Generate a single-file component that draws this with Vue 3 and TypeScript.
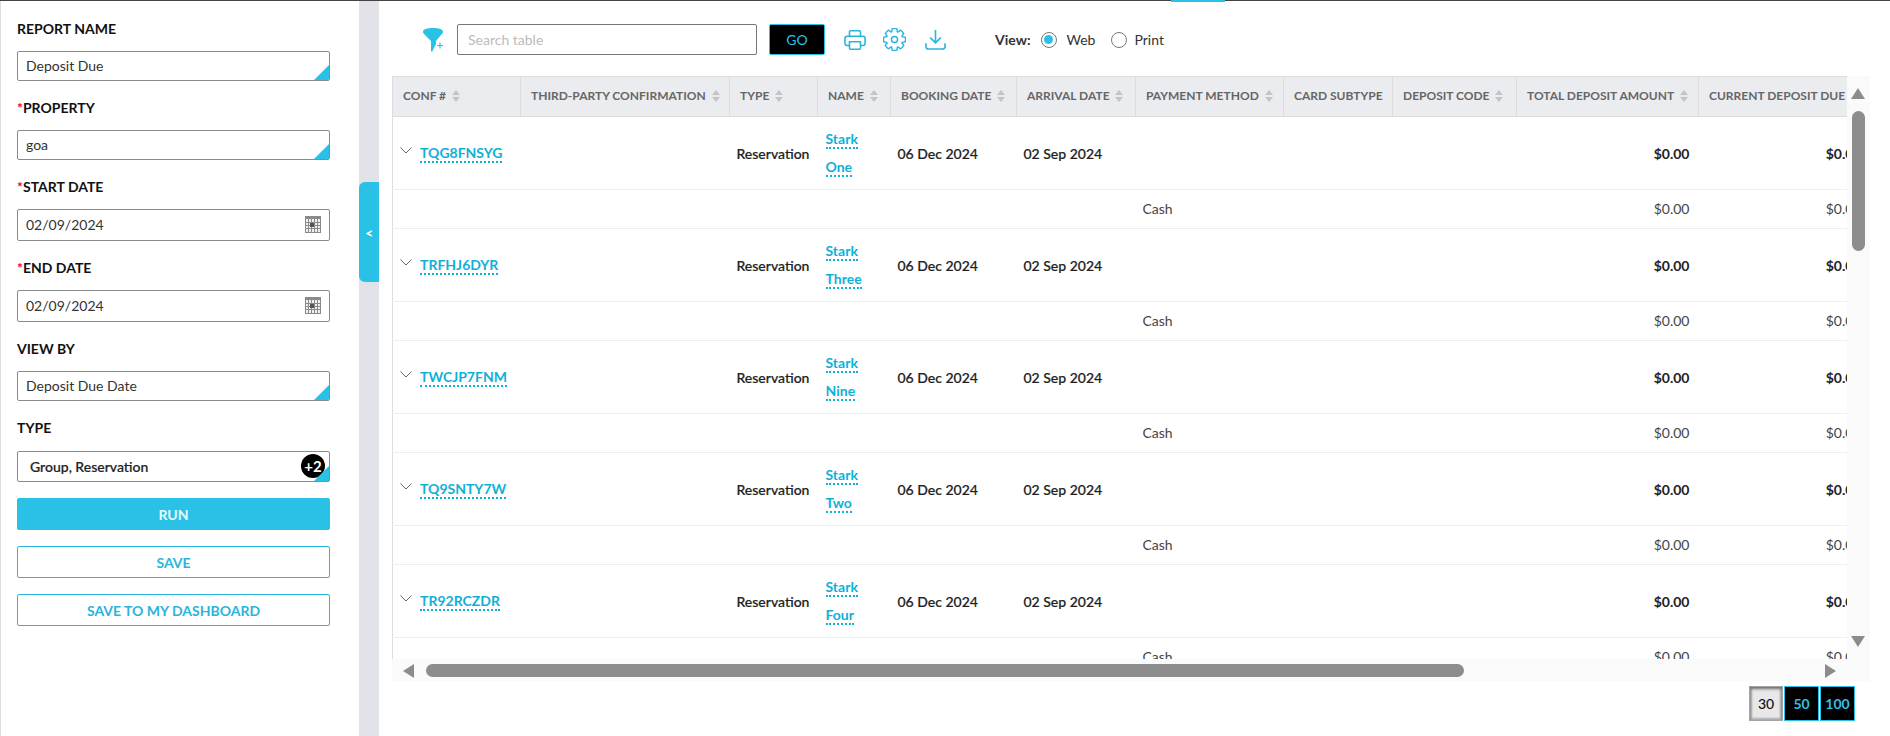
<script setup lang="ts">
type Booking = { conf: string; first: string; last: string };

const bookings: Booking[] = [
  { conf: "TQG8FNSYG", first: "Stark", last: "One" },
  { conf: "TRFHJ6DYR", first: "Stark", last: "Three" },
  { conf: "TWCJP7FNM", first: "Stark", last: "Nine" },
  { conf: "TQ9SNTY7W", first: "Stark", last: "Two" },
  { conf: "TR92RCZDR", first: "Stark", last: "Four" },
];

const columns = [
  { label: "CONF #", width: 128, sort: true },
  { label: "THIRD-PARTY CONFIRMATION", width: 209, sort: true },
  { label: "TYPE", width: 88, sort: true },
  { label: "NAME", width: 73, sort: true },
  { label: "BOOKING DATE", width: 126, sort: true },
  { label: "ARRIVAL DATE", width: 119, sort: true },
  { label: "PAYMENT METHOD", width: 148, sort: true },
  { label: "CARD SUBTYPE", width: 109, sort: false },
  { label: "DEPOSIT CODE", width: 124, sort: true },
  { label: "TOTAL DEPOSIT AMOUNT", width: 182, sort: true },
  { label: "CURRENT DEPOSIT DUE", width: 172, sort: false },
];

// eight rounded cog teeth around the centre of a 24 box
function gearPath(): string {
  const point = (deg: number, r: number) => {
    const a = (deg * Math.PI) / 180;
    return `${(12 + r * Math.cos(a)).toFixed(2)} ${(12 + r * Math.sin(a)).toFixed(2)}`;
  };
  let d = "";
  for (let i = 0; i < 8; i++) {
    const a = i * 45 - 90;
    d += `${i === 0 ? "M" : "L"}${point(a - 22.5, 8.4)} `;
    d += `C${point(a - 14, 8.6)} ${point(a - 17, 12.4)} ${point(a - 7, 11.4)} `;
    d += `Q${point(a, 11.8)} ${point(a + 7, 11.4)} `;
    d += `C${point(a + 17, 12.4)} ${point(a + 14, 8.6)} ${point(a + 22.5, 8.4)} `;
  }
  return d + "Z";
}

const gear = gearPath();
</script>

<template>
  <div class="page">
    <aside class="sidebar">
      <label class="field-label">REPORT NAME</label>
      <div class="input select">Deposit Due</div>
      <label class="field-label"><i>*</i>PROPERTY</label>
      <div class="input select">goa</div>
      <label class="field-label"><i>*</i>START DATE</label>
      <div class="input date">
        02/09/2024
        <svg class="cal" width="16" height="17" viewBox="0 0 16 17">
          <rect width="16" height="17" fill="#8a8a8a" />
          <path d="M1 3h14v13H1z" fill="#f0f0f0" />
          <path d="M0 6.500h16M0 9.500h16M0 12.500h16M3.500 3v14M6.500 3v14M9.500 3v14M12.500 3v14" stroke="#8a8a8a" stroke-width="1" />
          <rect x="5" y="7" width="4" height="4" fill="#555" />
        </svg>
      </div>
      <label class="field-label"><i>*</i>END DATE</label>
      <div class="input date">
        02/09/2024
        <svg class="cal" width="16" height="17" viewBox="0 0 16 17">
          <rect width="16" height="17" fill="#8a8a8a" />
          <path d="M1 3h14v13H1z" fill="#f0f0f0" />
          <path d="M0 6.500h16M0 9.500h16M0 12.500h16M3.500 3v14M6.500 3v14M9.500 3v14M12.500 3v14" stroke="#8a8a8a" stroke-width="1" />
          <rect x="5" y="7" width="4" height="4" fill="#555" />
        </svg>
      </div>
      <label class="field-label">VIEW BY</label>
      <div class="input select">Deposit Due Date</div>
      <label class="field-label tight">TYPE</label>
      <div class="input select multi">
        Group, Reservation
        <span class="more">+2</span>
      </div>
      <button class="btn primary">RUN</button>
      <button class="btn outline">SAVE</button>
      <button class="btn outline">SAVE TO MY DASHBOARD</button>
    </aside>

    <div class="divider">
      <button class="collapse">&lt;</button>
    </div>

    <main class="content">
      <span class="top-tab"></span>
      <div class="toolbar">
        <svg class="funnel" width="24" height="26" viewBox="0 0 24 26">
          <path d="M1 5c0-3 4-4 10-4s10 1 10 4c0 1-1 2-2 3l-5 6v3l-4 8-1-1v-10L3 8C2 7 1 6 1 5z" fill="#29c2e6" />
          <path d="M15 18.500h6M18 15.500v6" stroke="#29c2e6" stroke-width="1.200" fill="none" />
        </svg>
        <input class="search" placeholder="Search table" />
        <button class="go">GO</button>
        <svg class="tool print" width="22" height="22" viewBox="0 0 24 24" fill="none" stroke="#29b5dc" stroke-width="1.700">
          <path d="M6 8V3a1 1 0 0 1 1-1h10a1 1 0 0 1 1 1v5" />
          <path d="M6 18H3.500A2.500 2.500 0 0 1 1 15.500v-5A2.500 2.500 0 0 1 3.500 8h17a2.500 2.500 0 0 1 2.500 2.500v5a2.500 2.500 0 0 1-2.500 2.500H18" />
          <path d="M6 14h12v7a1 1 0 0 1-1 1H7a1 1 0 0 1-1-1z" />
        </svg>
        <svg class="tool gear" width="23" height="23" viewBox="0 0 24 24" fill="none" stroke="#29b5dc" stroke-width="1.500">
          <circle cx="12" cy="12" r="3.200" />
          <path :d="gear" stroke-linejoin="round" />
        </svg>
        <svg class="tool download" width="21" height="21" viewBox="0 0 22 22" fill="none" stroke="#29b5dc" stroke-width="1.700">
          <path d="M11 1v13M5.500 9l5.500 5.500L16.500 9" />
          <path d="M1 15v3.500A2.500 2.500 0 0 0 3.500 21h15a2.500 2.500 0 0 0 2.500-2.500V15" />
        </svg>
        <span class="view-label">View:</span>
        <span class="radio on"></span>
        <span class="radio-text">Web</span>
        <span class="radio second"></span>
        <span class="radio-text last">Print</span>
      </div>

      <div class="grid-wrap">
        <div class="table-clip">
          <table class="report">
            <colgroup>
              <col v-for="col in columns" :key="col.label" :style="{ width: col.width + 'px' }" />
            </colgroup>
            <thead>
              <tr>
                <th v-for="col in columns" :key="col.label">
                  {{ col.label }}
                  <span v-if="col.sort" class="sort"></span>
                </th>
              </tr>
            </thead>
            <tbody>
              <template v-for="item in bookings" :key="item.conf">
                <tr class="main-row">
                  <td>
                    <div class="conf">
                      <svg width="12" height="7" viewBox="0 0 12 7" fill="none" stroke="#666" stroke-width="1">
                        <path d="M.5.5 6 6l5.500-5.500" />
                      </svg>
                      <a class="link">{{ item.conf }}</a>
                    </div>
                  </td>
                  <td></td>
                  <td>Reservation</td>
                  <td>
                    <div class="name-cell">
                      <a class="link">{{ item.first }}</a>
                      <a class="link">{{ item.last }}</a>
                    </div>
                  </td>
                  <td>06 Dec 2024</td>
                  <td>02 Sep 2024</td>
                  <td></td>
                  <td></td>
                  <td></td>
                  <td class="num">$0.00</td>
                  <td class="num">$0.00</td>
                </tr>
                <tr class="sub-row">
                  <td></td>
                  <td></td>
                  <td></td>
                  <td></td>
                  <td></td>
                  <td></td>
                  <td>Cash</td>
                  <td></td>
                  <td></td>
                  <td class="num">$0.00</td>
                  <td class="num">$0.00</td>
                </tr>
              </template>
            </tbody>
          </table>
          <div class="vbar">
            <span class="tri up"></span>
            <span class="vthumb"></span>
            <span class="tri down"></span>
          </div>
        </div>
        <div class="hbar">
          <span class="tri left"></span>
          <span class="hthumb"></span>
          <span class="tri right"></span>
        </div>
      </div>

      <div class="pager">
        <button class="page-btn current">30</button>
        <button class="page-btn">50</button>
        <button class="page-btn">100</button>
      </div>
    </main>
  </div>
</template>

<style>
html,
body {
  margin: 0;
  background: #fff;
}
</style>

<style scoped>
.page {
  display: flex;
  width: 1890px;
  height: 736px;
  box-sizing: border-box;
  border-top: 1px solid #444;
  font-family: Lato, "Liberation Sans", sans-serif;
  font-size: 14px;
  color: #222;
  background: #fff;
}
.sidebar {
  width: 359px;
  box-sizing: border-box;
  padding: 20px 29px 0 16px;
  border-left: 1px solid #ddd;
  flex: none;
}
.field-label {
  display: block;
  height: 16px;
  line-height: 16px;
  font-size: 14px;
  font-weight: 700;
  color: #111;
  margin-bottom: 14px;
}
.field-label.tight {
  margin-bottom: 15px;
}
.field-label i {
  color: #f00;
  font-style: normal;
  font-weight: 700;
}
.input {
  position: relative;
  height: 30px;
  box-sizing: border-box;
  border: 1px solid #8a8a8a;
  border-radius: 2px;
  padding: 0 8px;
  line-height: 28px;
  font-size: 14px;
  color: #333;
  margin-bottom: 19px;
  overflow: hidden;
}
.input.select::after {
  content: "";
  position: absolute;
  right: 0;
  bottom: 0;
  border-style: solid;
  border-width: 0 0 15px 15px;
  border-color: transparent transparent #29c2e6 transparent;
}
.input.date {
  height: 32px;
  line-height: 30px;
}
.cal {
  position: absolute;
  right: 8px;
  top: 6px;
}
.multi {
  padding-left: 12px;
  font-weight: 500;
  color: #222;
  overflow: visible;
  height: 31px;
  line-height: 29px;
  margin-bottom: 16px;
  -webkit-text-stroke: 0.2px #222;
}
.more {
  position: absolute;
  right: 4px;
  top: 2px;
  width: 24px;
  height: 24px;
  border-radius: 50%;
  background: #000;
  color: #fff;
  font-size: 15px;
  font-weight: 700;
  line-height: 24px;
  text-align: center;
  -webkit-text-stroke: 0;
}
.btn {
  display: block;
  width: 100%;
  height: 32px;
  border-radius: 2px;
  font-family: inherit;
  font-size: 14px;
  font-weight: 700;
  margin-bottom: 16px;
  padding: 0;
}
.primary {
  background: #29c2e6;
  border: 1px solid #29c2e6;
  color: #e8f8fc;
}
.outline {
  background: #fff;
  border: 1px solid #29b5dc;
  color: #29b5dc;
}
.divider {
  position: relative;
  width: 20px;
  flex: none;
  background: #e2e3e8;
}
.collapse {
  position: absolute;
  left: 0;
  top: 181px;
  width: 20px;
  height: 100px;
  padding: 0;
  border: 0;
  border-radius: 6px 0 0 6px;
  background: #29c2e6;
  color: #fff;
  font-family: inherit;
  font-size: 14px;
  font-weight: 900;
}
.content {
  position: relative;
  flex: 1;
  min-width: 0;
  padding: 0 20px 0 13px;
}
.top-tab {
  position: absolute;
  left: 792px;
  top: -1px;
  width: 54px;
  height: 2px;
  background: #29c2e6;
}
.toolbar {
  display: flex;
  align-items: center;
  height: 31px;
  margin-top: 23px;
}
.funnel {
  margin-left: 30px;
  flex: none;
}
.search {
  width: 300px;
  height: 31px;
  box-sizing: border-box;
  margin-left: 11px;
  padding: 0 10px;
  border: 1px solid #777;
  border-radius: 2px;
  font-family: inherit;
  font-size: 14px;
  outline: none;
}
.search::placeholder {
  color: #bbb;
}
.go {
  width: 56px;
  height: 31px;
  margin-left: 12px;
  padding: 0;
  border: 1px solid #29c2e6;
  border-radius: 2px;
  background: #000;
  color: #29c2e6;
  font-family: inherit;
  font-size: 14px;
}
.tool {
  flex: none;
}
.print {
  margin-left: 19px;
}
.gear {
  margin-left: 17px;
}
.download {
  margin-left: 19px;
}
.view-label {
  margin-left: 49px;
  font-weight: 700;
  font-size: 14px;
  color: #333;
}
.radio {
  position: relative;
  width: 16px;
  height: 16px;
  box-sizing: border-box;
  margin-left: 10px;
  border: 1.500px solid #777;
  border-radius: 50%;
}
.radio.on::after {
  content: "";
  position: absolute;
  left: 2px;
  top: 2px;
  width: 9px;
  height: 9px;
  border-radius: 50%;
  background: #29c2e6;
}
.radio.second {
  margin-left: 16px;
}
.radio-text {
  margin-left: 10px;
  color: #333;
}
.radio-text.last {
  margin-left: 7px;
}
.grid-wrap {
  margin-top: 21px;
  width: 1478px;
}
.table-clip {
  position: relative;
  height: 583px;
  overflow: hidden;
  padding-right: 23px;
}
.report {
  table-layout: fixed;
  width: 1478px;
  border-collapse: collapse;
  border-left: 1px solid #ddd;
}
.report th {
  height: 40px;
  box-sizing: border-box;
  padding: 0 0 2px 10px;
  background: #ebecf0;
  border: 1px solid #dcdcdc;
  font-size: 12px;
  font-weight: 700;
  color: #666;
  text-align: left;
  white-space: nowrap;
}
.sort {
  display: inline-block;
  position: relative;
  width: 8px;
  height: 12px;
  margin-left: 3px;
  vertical-align: -2px;
}
.sort::before,
.sort::after {
  content: "";
  position: absolute;
  left: 0;
  border-left: 4px solid transparent;
  border-right: 4px solid transparent;
}
.sort::before {
  top: 0;
  border-bottom: 5px solid #c4c4c4;
}
.sort::after {
  bottom: 0;
  border-top: 5px solid #c4c4c4;
}
.report td {
  box-sizing: border-box;
  padding: 0 7px;
  font-size: 14px;
  color: #222;
  white-space: nowrap;
  overflow: hidden;
}
.main-row td {
  height: 73px;
  border-bottom: 1px solid #eee;
  font-weight: 500;
  -webkit-text-stroke: 0.2px #222;
}
.report .sub-row td {
  height: 39px;
  padding-bottom: 2px;
  border-bottom: 1px solid #eee;
  color: #444;
  font-weight: 400;
}
.report td.num {
  text-align: right;
  padding-right: 9px;
}
.main-row .num {
  font-weight: 700;
  -webkit-text-stroke: 0;
}
.conf {
  display: flex;
  align-items: center;
  gap: 8px;
}
.conf svg {
  margin-top: -6px;
  flex: none;
}
.link {
  color: #0fb0d8;
  font-weight: 700;
  border-bottom: 2px dotted #0fb0d8;
  line-height: 17px;
  -webkit-text-stroke: 0;
}
.name-cell {
  display: flex;
  flex-direction: column;
  align-items: flex-start;
  gap: 9px;
  margin-left: 1px;
}
.vbar {
  position: absolute;
  top: 0;
  right: 0;
  bottom: 0;
  width: 23px;
  background: #fafafa;
}
.vthumb {
  position: absolute;
  left: 5px;
  top: 35px;
  width: 13px;
  height: 140px;
  border-radius: 7px;
  background: #8c8c8c;
}
.tri {
  position: absolute;
  width: 0;
  height: 0;
}
.tri.up {
  left: 4px;
  top: 12px;
  border-left: 7px solid transparent;
  border-right: 7px solid transparent;
  border-bottom: 11px solid #8c8c8c;
}
.tri.down {
  left: 4px;
  bottom: 12px;
  border-left: 7px solid transparent;
  border-right: 7px solid transparent;
  border-top: 11px solid #8c8c8c;
}
.hbar {
  position: relative;
  height: 22px;
  background: #fafafa;
}
.hthumb {
  position: absolute;
  left: 34px;
  top: 5px;
  width: 1038px;
  height: 13px;
  border-radius: 7px;
  background: #8c8c8c;
}
.tri.left {
  left: 11px;
  top: 5px;
  border-top: 7px solid transparent;
  border-bottom: 7px solid transparent;
  border-right: 11px solid #8c8c8c;
}
.tri.right {
  right: 34px;
  top: 5px;
  border-top: 7px solid transparent;
  border-bottom: 7px solid transparent;
  border-left: 11px solid #8c8c8c;
}
.pager {
  display: flex;
  justify-content: flex-end;
  width: 1463px;
  gap: 1px;
  margin-top: 5px;
}
.page-btn {
  width: 35px;
  height: 35px;
  padding: 0;
  box-sizing: border-box;
  border: 1px solid #29c2e6;
  background: #000;
  color: #29c2e6;
  font-family: inherit;
  font-size: 14px;
  font-weight: 700;
}
.page-btn.current {
  width: 34px;
  border: 1px solid #a5a5a5;
  box-shadow: inset 0 2px 3px #707070, inset 2px 0 2px #b0b0b0, inset -2px 0 2px #b0b0b0, inset 0 -2px 2px #b0b0b0;
  background: #e8e8e8;
  color: #111;
  font-weight: 500;
}
</style>
